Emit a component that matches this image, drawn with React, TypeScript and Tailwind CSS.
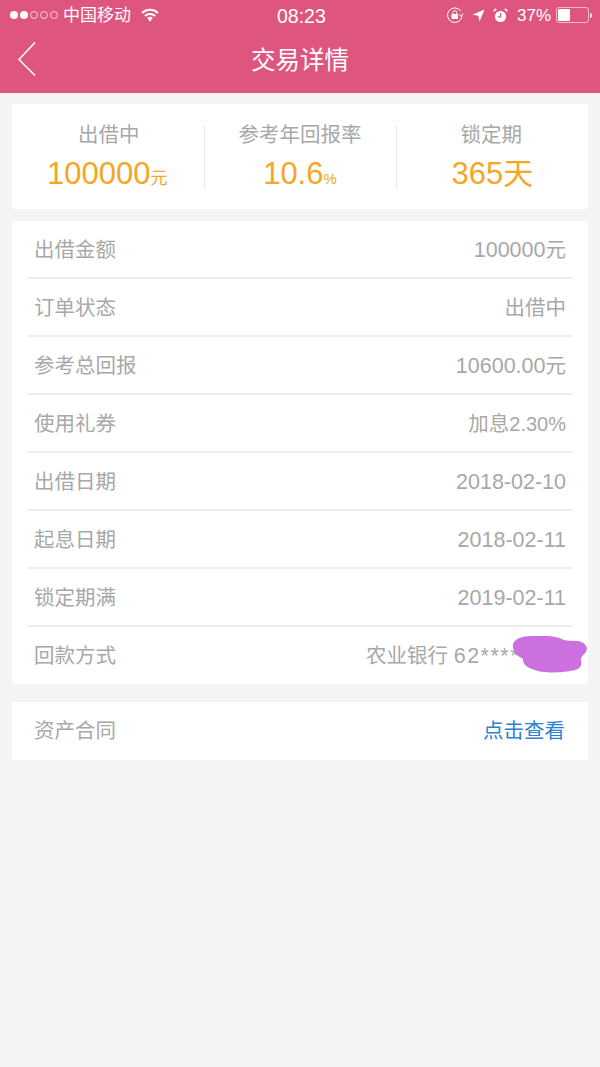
import React from 'react';

const font = "font-['Liberation_Sans','Noto_Sans_CJK_SC',sans-serif]";

// num is drawn a bit larger than the CJK text, as the reference's latin face is wider
const rows = [
    { label: '出借金额', num: '100000', text: '元' },
    { label: '订单状态', num: '', text: '出借中' },
    { label: '参考总回报', num: '10600.00', text: '元' },
    { label: '使用礼券', pre: '加息', num: '2.30%', text: '', small: true },
    { label: '出借日期', num: '2018-02-10', text: '' },
    { label: '起息日期', num: '2018-02-11', text: '' },
    { label: '锁定期满', num: '2019-02-11', text: '' },
];

const StatusBar = () => (
    <div className="relative flex h-[30px] items-center justify-between pl-[10px] pr-[8px] text-white">
        <div className="flex items-center">
            <div className="flex items-center gap-[2px]">
                <span className="h-[8px] w-[8px] rounded-full bg-white" />
                <span className="h-[8px] w-[8px] rounded-full bg-white" />
                <span className="h-[8px] w-[8px] rounded-full border border-white/70" />
                <span className="h-[8px] w-[8px] rounded-full border border-white/70" />
                <span className="h-[8px] w-[8px] rounded-full border border-white/70" />
            </div>
            <span className="ml-[5px] text-[17px] leading-none">中国移动</span>
            <svg className="ml-[10px] -mt-[1px]" width="18" height="14" viewBox="0 0 18 14" fill="none" stroke="white" strokeWidth="2">
                <path d="M1 5C5.5 .8 12.5 .8 17 5" />
                <path d="M3.8 8C6.8 5.4 11.2 5.4 14.2 8" />
                <path d="M6.8 10.8C8 9.8 10 9.8 11.2 10.8" />
                <circle cx="9" cy="12" r="1.3" fill="white" stroke="none" />
            </svg>
        </div>
        <span className="absolute left-[277px] top-[5px] text-[19.5px] leading-[22px]">08:23</span>
        <div className="flex items-center">
            <svg width="18" height="18" viewBox="0 0 18 18" fill="none" stroke="white" strokeWidth="1">
                <path d="M16 10.5A7.3 7.3 0 1 1 14.8 5" />
                <path d="M17 7.5L15.2 10.4L13 8.2" />
                <rect x="5.5" y="8" width="6.5" height="5" rx="0.5" fill="white" stroke="none" />
                <path d="M7 8V6.5a1.8 1.8 0 0 1 3.6 0V8" />
            </svg>
            <svg className="ml-[8px]" width="13" height="13" viewBox="0 0 13 13" fill="white">
                <path d="M12.5 .5L7.5 12.5L6.3 6.8L.5 5.8Z" />
            </svg>
            <svg className="ml-[8px]" width="15" height="15" viewBox="0 0 15 15" fill="white">
                <circle cx="7.5" cy="8.5" r="5.6" />
                <path d="M0.8 4L4 1.2L2.2 .6L.4 2.3Z M14.2 4L11 1.2L12.8 .6L14.6 2.3Z" />
                <path d="M7.5 5V8.8H4.8" fill="none" stroke="#de5680" strokeWidth="1.2" />
            </svg>
            <span className="ml-[9px] text-[17px] leading-none">37%</span>
            <div className="ml-[5px] h-[16px] w-[33px] rounded-[3px] border border-white/60 p-[1px]">
                <div className="h-full w-[12px] rounded-[1px] bg-white" />
            </div>
            <span className="ml-[1px] h-[5px] w-[2px] rounded-r-sm bg-white/80" />
        </div>
    </div>
);

const Stat = ({ label, children, divider }: { label: string; children: React.ReactNode; divider?: boolean }) => (
    <div className="relative flex-1 text-center">
        {divider && <span className="absolute left-0 top-0 h-[64px] w-px bg-[#e8e8e8]" />}
        <div className="text-[20.5px] leading-[20px] text-[#a8a8a8]">{label}</div>
        <div className="mt-[12px] flex h-[34px] items-baseline justify-center text-[#f5a623]">{children}</div>
    </div>
);

const App: React.FC = () => {
    return (
        <div className={`min-h-[1067px] w-[600px] bg-[#f4f4f4] ${font}`}>
            {/* Header */}
            <header className="h-[93px] bg-[#de5680]">
                <StatusBar />
                <div className="relative flex h-[63px] items-center justify-center">
                    <svg className="absolute left-[17px] top-[11px]" width="20" height="36" viewBox="0 0 20 36" fill="none" stroke="white" strokeWidth="1.5">
                        <path d="M18 1.5L2 18.5L18 34.5" />
                    </svg>
                    <h1 className="-mt-[1px] text-[24.5px] font-normal leading-none text-white">交易详情</h1>
                </div>
            </header>

            {/* Summary */}
            <section className="mx-[12px] mt-[11px] flex h-[105px] bg-white px-px pt-[21px]">
                <Stat label="出借中">
                    <span className="-ml-[3px] text-[31px] leading-[34px]">100000</span>
                    <span className="text-[17px]">元</span>
                </Stat>
                <Stat label="参考年回报率" divider>
                    <span className="text-[31px] leading-[34px]">10.6</span>
                    <span className="text-[15px]">%</span>
                </Stat>
                <Stat label="锁定期" divider>
                    <span className="ml-[2px] text-[31px] leading-[34px]">365</span>
                    <span className="text-[30px] leading-[34px]">天</span>
                </Stat>
            </section>

            {/* Detail rows */}
            <section className="mx-[12px] mt-[12px] bg-white px-[16px]">
                {rows.map((row) => (
                    <div key={row.label} className="flex h-[58px] items-center justify-between border-b-2 border-[#eeeeee] px-[6px] pt-[2px] text-[20.5px] text-[#a8a8a8]">
                        <span>{row.label}</span>
                        <span>
                            {row.pre}
                            <span className={row.small ? 'text-[20px]' : 'text-[21.5px]'}>{row.num}</span>
                            {row.text}
                        </span>
                    </div>
                ))}
                <div className="relative flex h-[57px] items-center pl-[6px] pt-[2px] text-[20.5px] text-[#a8a8a8]">
                    <span>回款方式</span>
                    <span className="absolute left-[338px] whitespace-nowrap">
                        农业银行 <span className="text-[21.5px] tracking-[1.5px]">62*****</span>
                    </span>
                    {/* Scribble hiding the card number */}
                    <svg className="absolute left-[484px] top-[9px]" width="76" height="38" viewBox="0 0 78 42" fill="#cc70e0" preserveAspectRatio="none">
                        <path d="M1 9C3 3 10 0 20 0C32 -1 46 0 52 4C56 6 64 5 70 6C76 8 79 14 75 19C72 22 70 24 71 29C72 36 66 38 58 39C46 41 30 41 22 37C14 35 11 30 11 25C6 23 0 17 1 9Z" />
                    </svg>
                </div>
            </section>

            {/* Contract */}
            <section className="mx-[12px] mt-[18px] flex h-[58px] items-center justify-between bg-white pl-[22px] pr-[23px] pt-px text-[20.5px]">
                <span className="text-[#a8a8a8]">资产合同</span>
                <span className="text-[#2f80d0]">点击查看</span>
            </section>
        </div>
    );
};

export default App;
